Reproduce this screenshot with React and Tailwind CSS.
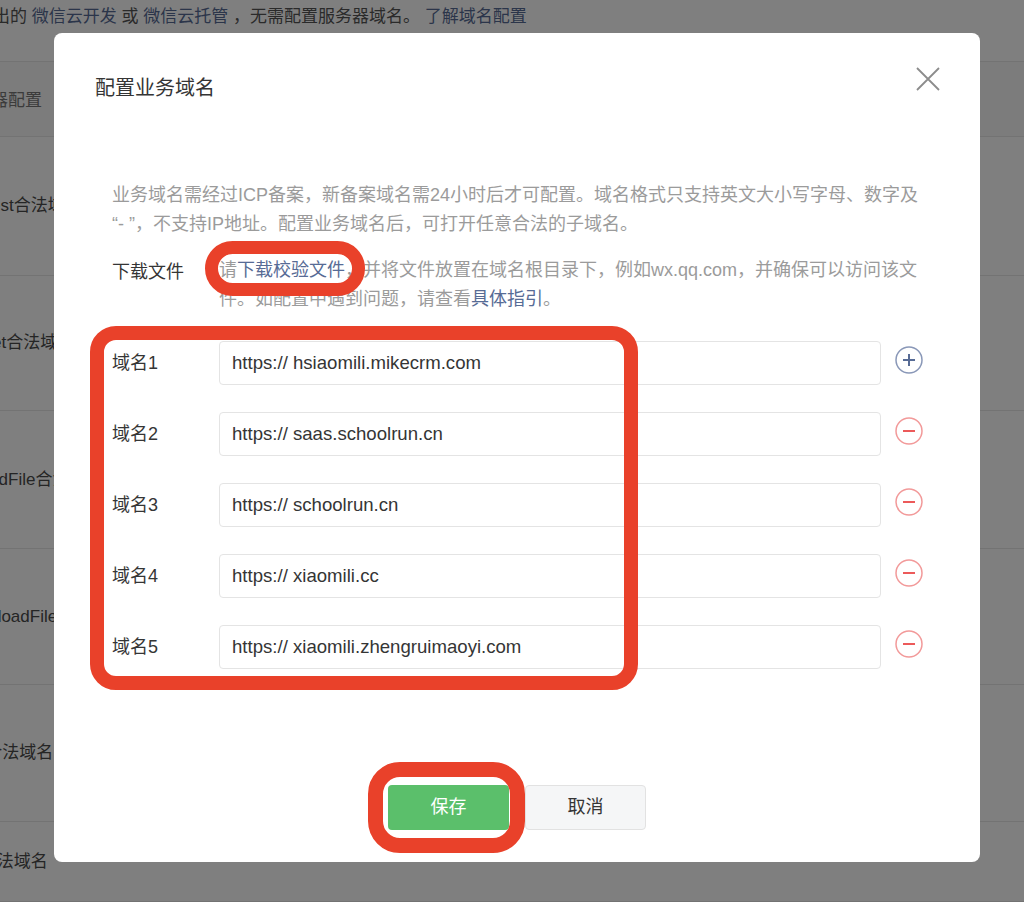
import React from 'react';

const rows = [
  { label: '域名1', value: 'https:// hsiaomili.mikecrm.com', add: true },
  { label: '域名2', value: 'https:// saas.schoolrun.cn' },
  { label: '域名3', value: 'https:// schoolrun.cn' },
  { label: '域名4', value: 'https:// xiaomili.cc' },
  { label: '域名5', value: 'https:// xiaomili.zhengruimaoyi.com' },
];

const bgRows = [
  { label: 'request合法域名', h: 'h-[139px]' },
  { label: 'socket合法域名', h: 'h-[135px]' },
  { label: 'uploadFile合法域名', h: 'h-[138px]' },
  { label: 'downloadFile合法域名', h: 'h-[136px]' },
  { label: 'udp合法域名', h: 'h-[137px]' },
  { label: 'tcp合法域名', h: 'h-[80px]' },
];

const PlusIcon = () => (
  <svg width="28" height="28" viewBox="0 0 28 28">
    <circle cx="14" cy="14" r="13" fill="none" stroke="#8a98b8" strokeWidth="1.5" />
    <path d="M8 14h12M14 8v12" stroke="#576b95" strokeWidth="2" />
  </svg>
);

const MinusIcon = () => (
  <svg width="28" height="28" viewBox="0 0 28 28">
    <circle cx="14" cy="14" r="13" fill="none" stroke="#f29a9a" strokeWidth="1.5" />
    <path d="M8 14h12" stroke="#ec5a5a" strokeWidth="2" />
  </svg>
);

export default function App() {
  return (
    <div className="relative h-[902px] w-[1024px] overflow-hidden bg-white font-['Liberation_Sans','Noto_Sans_CJK_SC',sans-serif]">
      {/* page behind the dialog */}
      <div className="h-[62px] border-b border-[#e6e6e6]">
        <p className="-ml-[7px] whitespace-nowrap text-[17px] leading-[34px] text-[#555]">
          出的 <span className="text-[#576b95]">微信云开发</span> 或{' '}
          <span className="text-[#576b95]">微信云托管</span> ，无需配置服务器域名。{' '}
          <span className="text-[#576b95]">了解域名配置</span>
        </p>
      </div>
      <div className="-ml-[43px]">
        <div className="flex h-[75px] items-center border-b border-[#e6e6e6] bg-[#f8f8f8] pt-[4px] text-[17px] text-[#777]">
          服务器配置
        </div>
        {bgRows.map((r) => (
          <div key={r.label} className={`flex items-center border-b border-[#e6e6e6] text-[17px] text-[#4a4a4a] ${r.h}`}>
            {r.label}
          </div>
        ))}
      </div>

      {/* overlay + dialog */}
      <div className="absolute inset-0 bg-black/50">
        <div className="relative ml-[54px] mt-[33px] h-[829px] w-[926px] rounded-[8px] bg-white">
          <h2 className="pl-[41px] pt-[43px] text-[20px] leading-[24px] text-[#353535]">配置业务域名</h2>
          <button className="absolute right-[40px] top-[34px]">
            <svg width="24" height="24" viewBox="0 0 24 24">
              <path d="M1 1L23 23M23 1L1 23" stroke="#8c8c8c" strokeWidth="1.8" />
            </svg>
          </button>

          <div className="ml-[58px] mt-[81px]">
            <p className="whitespace-nowrap text-[18px] leading-[29px] text-[#9b9b9b]">
              业务域名需经过ICP备案，新备案域名需24小时后才可配置。域名格式只支持英文大小写字母、数字及
              <br />
              “- ”，不支持IP地址。配置业务域名后，可打开任意合法的子域名。
            </p>

            <div className="mt-[17px] flex text-[18px] leading-[29px]">
              <div className="w-[107px] pt-[2px] text-[#353535]">下载文件</div>
              <p className="whitespace-nowrap text-[#9b9b9b]">
                请<span className="text-[#576b95]">下载校验文件</span>，并将文件放置在域名根目录下，例如wx.qq.com，并确保可以访问该文
                <br />
                件。如配置中遇到问题，请查看<span className="text-[#576b95]">具体指引</span>。
              </p>
            </div>

            <div className="mt-[27px] flex flex-col gap-[27px]">
              {rows.map((r) => (
                <div key={r.label} className="flex items-center">
                  <div className="w-[107px] text-[18px] text-[#353535]">{r.label}</div>
                  <input
                    readOnly
                    value={r.value}
                    className="h-[44px] w-[662px] rounded-[4px] border border-[#e4e4e4] bg-white pl-[12px] text-[18.6px] text-[#353535] outline-none"
                  />
                  <div className="mb-[6px] ml-[14px]">{r.add ? <PlusIcon /> : <MinusIcon />}</div>
                </div>
              ))}
            </div>
          </div>

          <div className="mt-[116px] flex justify-center gap-4">
            <button className="h-[45px] w-[121px] rounded-[4px] bg-[#5bbf6b] text-[18px] text-white">保存</button>
            <button className="h-[45px] w-[121px] rounded-[4px] border border-[#e2e2e2] bg-[#f5f6f7] text-[18px] text-[#353535]">
              取消
            </button>
          </div>

          {/* red annotation marks */}
          <div className="pointer-events-none absolute left-[151px] top-[208px] h-[55px] w-[160px] rounded-[28px] border-[13px] border-[#e9412a]" />
          <div className="pointer-events-none absolute left-[36px] top-[293px] h-[364px] w-[548px] rounded-[26px] border-[14px] border-[#e9412a]" />
          <div className="pointer-events-none absolute left-[314px] top-[729px] h-[91px] w-[157px] rounded-[32px] border-[15px] border-[#e9412a]" />
        </div>
      </div>
    </div>
  );
}
